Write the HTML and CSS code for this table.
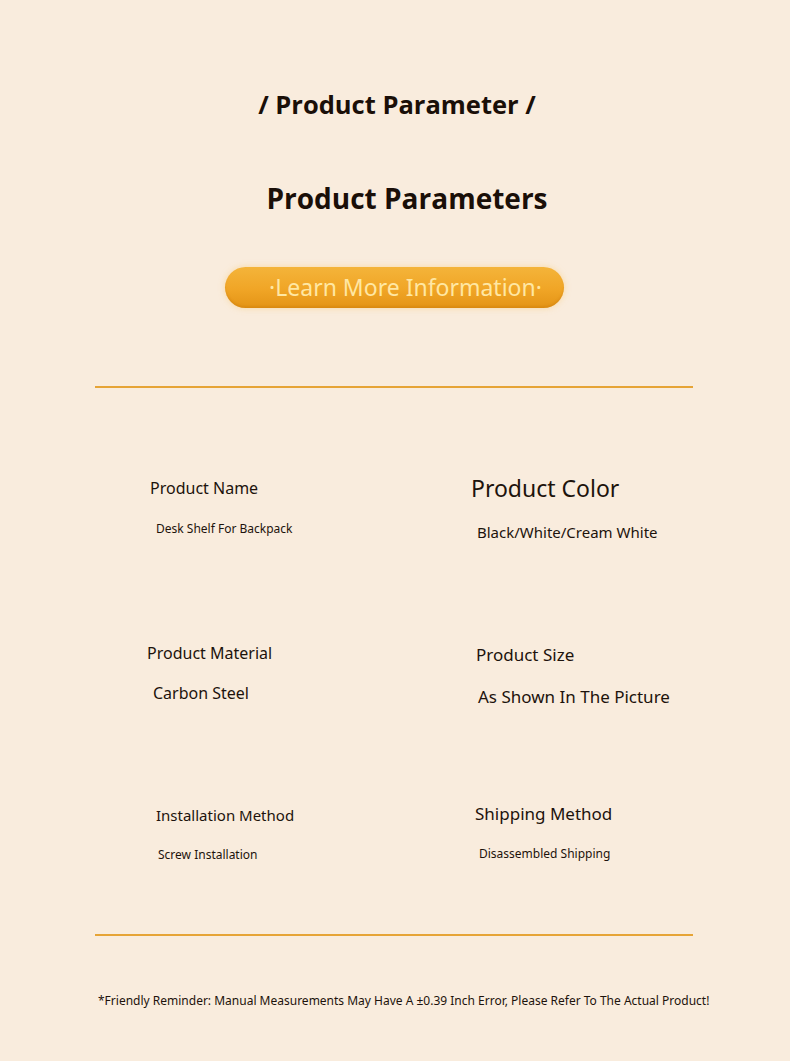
FILE: index.html
```html
<!DOCTYPE html>
<html lang="en">
<head>
<meta charset="utf-8">
<title>Product Parameter</title>
<link rel="stylesheet" href="styles.css">
</head>
<body>
<main class="page">
  <header class="head">
    <h1 class="eyebrow">/ Product Parameter /</h1>
    <h2 class="title">Product Parameters</h2>
    <div class="btn">·Learn More Information·</div>
  </header>
  <hr class="rule rule-top">
  <section class="grid">
    <div class="cell c1">
      <div class="label">Product Name</div>
      <div class="value v-sm">Desk Shelf For Backpack</div>
    </div>
    <div class="cell c2">
      <div class="label l-lg">Product Color</div>
      <div class="value v-md">Black/White/Cream White</div>
    </div>
    <div class="cell c3">
      <div class="label">Product Material</div>
      <div class="value v-lg">Carbon Steel</div>
    </div>
    <div class="cell c4">
      <div class="label l-md">Product Size</div>
      <div class="value v-xl">As Shown In The Picture</div>
    </div>
    <div class="cell c5">
      <div class="label l-sm">Installation Method</div>
      <div class="value v-sm">Screw Installation</div>
    </div>
    <div class="cell c6">
      <div class="label l-md">Shipping Method</div>
      <div class="value v-sm">Disassembled Shipping</div>
    </div>
  </section>
  <hr class="rule rule-bottom">
  <p class="note">*Friendly Reminder: Manual Measurements May Have A ±0.39 Inch Error, Please Refer To The Actual Product!</p>
</main>
</body>
</html>
```

FILE: styles.css
```css
html, body {
  margin: 0;
  padding: 0;
  background: #f9ecdd;
}
body {
  font-family: "Noto Sans", "Open Sans", sans-serif;
  color: #1d130c;
  width: 790px;
  height: 1061px;
  overflow: hidden;
}
.page {
  display: flex;
  flex-direction: column;
}
.head {
  display: flex;
  flex-direction: column;
  align-items: center;
}
.eyebrow {
  margin: 88px 0 0 4px;
  font-family: "Open Sans", "Noto Sans", sans-serif;
  font-size: 25.5px;
  font-weight: 700;
  line-height: 32px;
  color: #1a0f08;
}
.title {
  margin: 59px 0 0 24px;
  font-family: "Open Sans", "Noto Sans", sans-serif;
  font-size: 28px;
  font-weight: 700;
  line-height: 38px;
  color: #1a0f08;
}
.btn {
  margin: 50px 0 0 -1px;
  width: 339px;
  height: 41px;
  box-sizing: border-box;
  border-radius: 21px;
  background: linear-gradient(180deg, #f4b43a 0%, #f0a526 55%, #e49416 100%);
  box-shadow: 0 0 6px rgba(250, 200, 110, 0.55), inset 0 -2px 2px rgba(200, 120, 10, 0.35);
  color: #ffe7a3;
  font-family: "Noto Sans", sans-serif;
  font-size: 23px;
  line-height: 41px;
  text-align: center;
  padding-left: 22px;
  white-space: nowrap;
}
.rule {
  margin: 0 0 0 95px;
  width: 598px;
  height: 2px;
  border: 0;
  background: #e6a436;
}
.rule-top {
  margin-top: 78px;
}
.rule-bottom {
  margin-top: 70px;
}
.grid {
  display: grid;
  grid-template-columns: 299px 299px;
  margin: 0 0 0 95px;
}
.cell {
  display: flex;
  flex-direction: column;
}
.label {
  font-size: 16px;
  line-height: 22px;
}
.l-lg { font-size: 23px; line-height: 30px; }
.l-md { font-size: 17px; line-height: 22px; }
.l-sm { font-size: 15px; line-height: 22px; }
.value { color: #1d130c; }
.v-sm { font-size: 12px; line-height: 18px; }
.v-md { font-size: 15px; line-height: 20px; }
.v-lg { font-size: 16px; line-height: 22px; }
.v-xl { font-size: 17px; line-height: 22px; }

.c1 { padding: 89px 0 0 55px; }
.c1 .value { margin: 21px 0 0 6px; }
.c2 { padding: 85px 0 0 77px; }
.c2 .value { margin: 19px 0 0 6px; }
.c3 { padding: 100px 0 0 52px; }
.c3 .value { margin: 18px 0 0 6px; }
.c4 { padding: 102px 0 0 82px; }
.c4 .value { margin: 20px 0 0 2px; }
.c5 { padding: 96px 0 0 61px; }
.c5 .value { margin: 20px 0 0 2px; }
.c6 { padding: 95px 0 0 81px; }
.c6 .value { margin: 20px 0 0 4px; }

.note {
  margin: 56px 0 0 98px;
  font-size: 12px;
  line-height: 18px;
  color: #1d130c;
  white-space: nowrap;
}
```
